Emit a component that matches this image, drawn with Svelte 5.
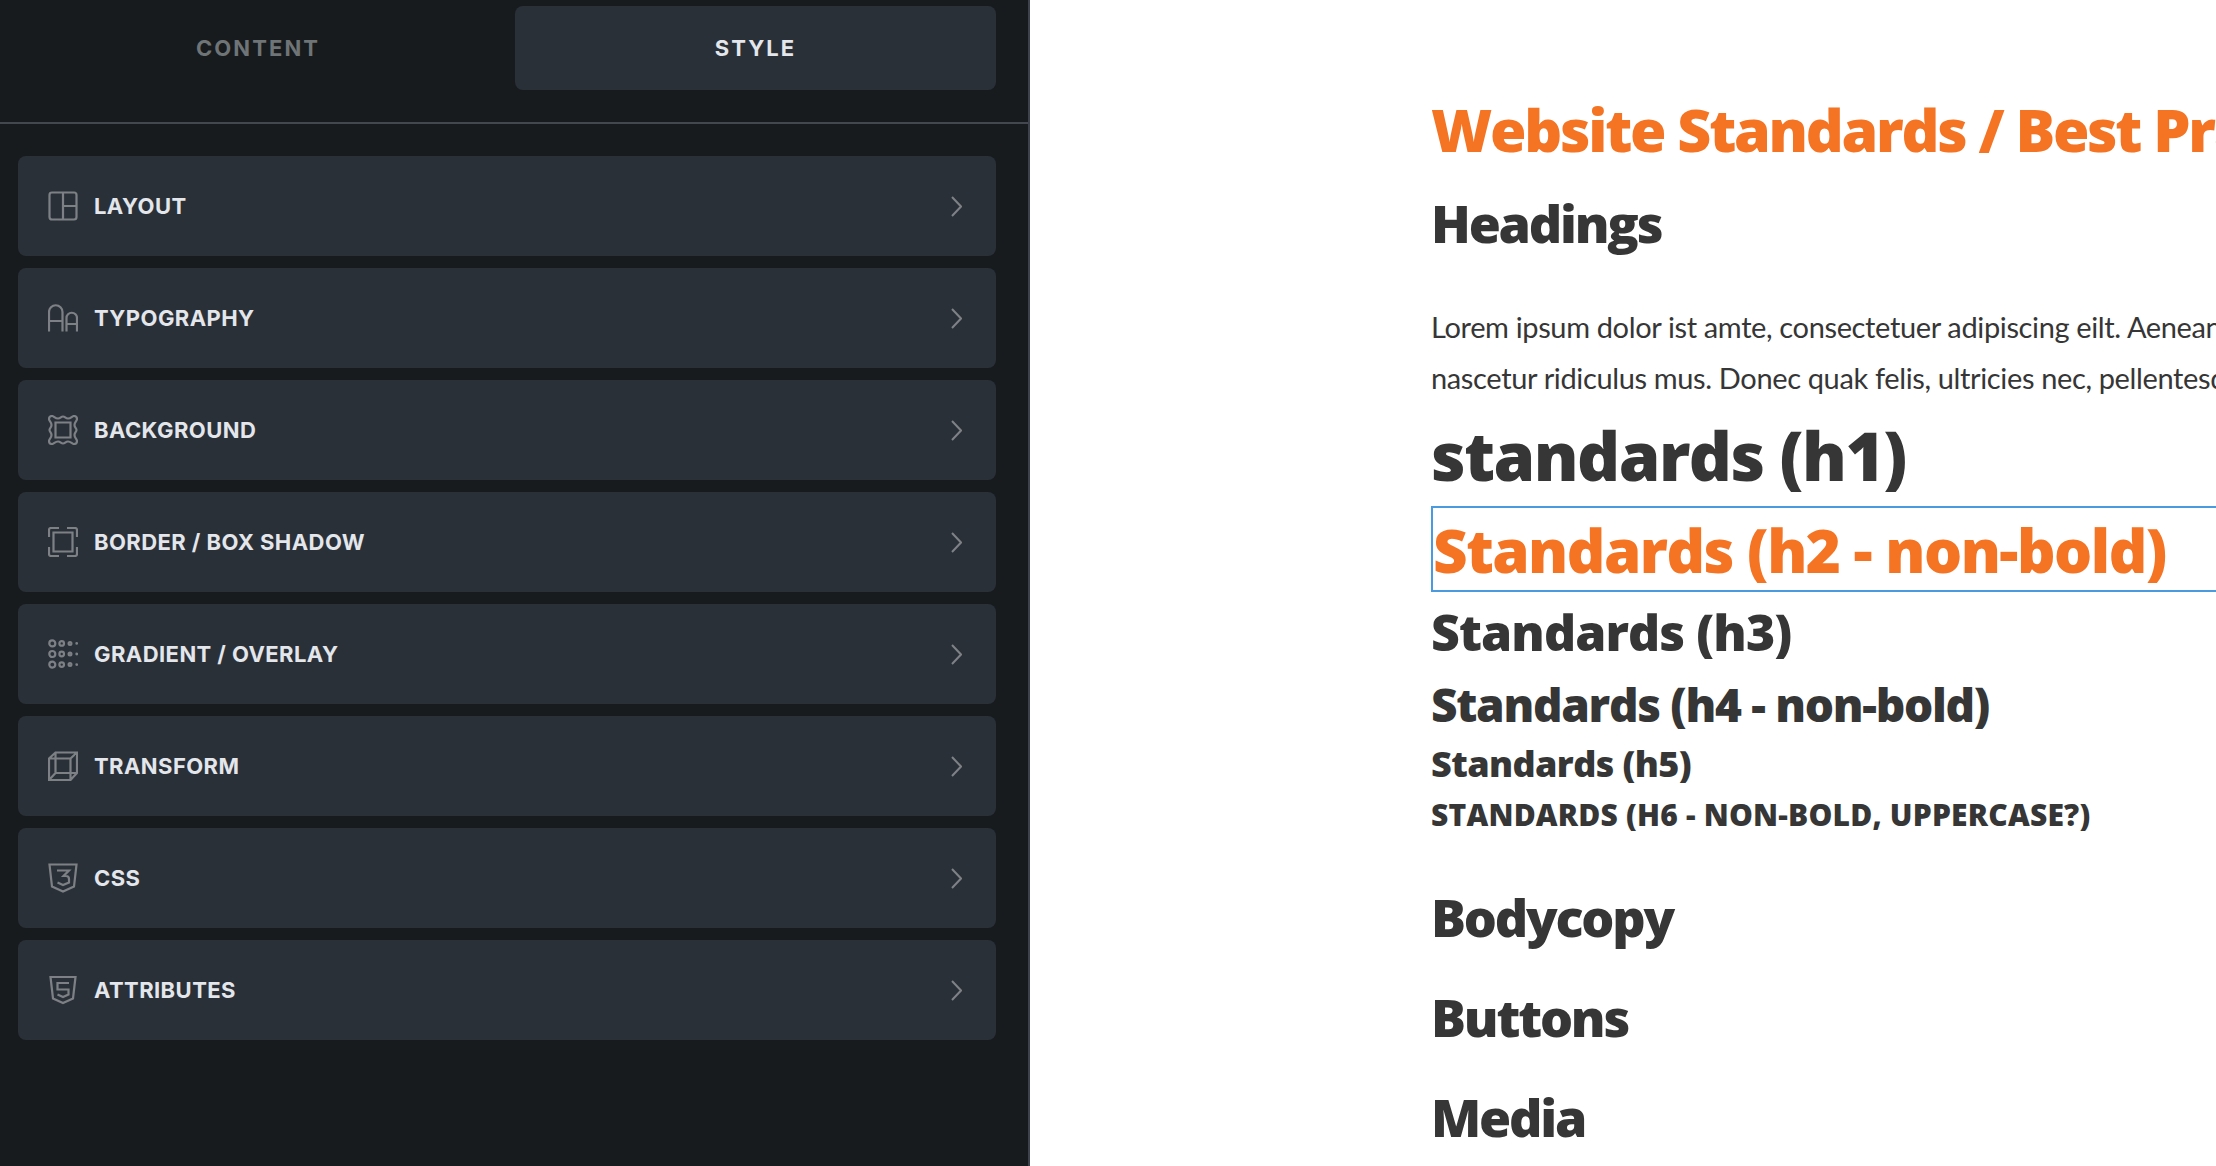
<script>
  const items = [
    { label: 'LAYOUT', d: 'M4 1.5H26Q28.5 1.5 28.5 4V26Q28.5 28.5 26 28.5H4Q1.5 28.5 1.5 26V4Q1.5 1.5 4 1.5ZM15 1.5V28.5M15 15H28.5' },
    { label: 'TYPOGRAPHY', d: 'M1 28.5V9A6.7 6.7 0 0 1 14.5 9V28.5M1 18H14.5M18.5 28.5V15A5.2 5.2 0 0 1 29 15V28.5M18.5 21H29' },
    { label: 'BACKGROUND', d: 'M4 1C6 1 7 3.5 10 3.5C12.5 3.5 13 1.5 15 1.5C17 1.5 17.5 3.5 20 3.5C23 3.5 24 1 26 1C28 1 29 2 29 4C29 6 26.5 7 26.5 10C26.5 12.5 28.5 13 28.5 15C28.5 17 26.5 17.5 26.5 20C26.5 23 29 24 29 26C29 28 28 29 26 29C24 29 23 26.5 20 26.5C17.5 26.5 17 28.5 15 28.5C13 28.5 12.5 26.5 10 26.5C7 26.5 6 29 4 29C2 29 1 28 1 26C1 24 3.5 23 3.5 20C3.5 17.5 1.5 17 1.5 15C1.5 13 3.5 12.5 3.5 10C3.5 7 1 6 1 4C1 2 2 1 4 1ZM7.5 7.5H22.5V22.5H7.5Z' },
    { label: 'BORDER / BOX SHADOW', d: 'M1 10V3Q1 1 3 1H11M19 1H27Q29 1 29 3V10M29 20V27Q29 29 27 29H19M11 29H3Q1 29 1 27V20M5.5 5.5H24.5V24.5H5.5Z' },
    { label: 'GRADIENT / OVERLAY', dots: true },
    { label: 'TRANSFORM', d: 'M1 7.5L7.5 1.5H29V22L22.5 29H1ZM1 7.5H22.5V29M7.5 1.5V22H29M22.5 7.5L29 1.5M7.5 22L1 29' },
    { label: 'CSS', d: 'M1.5 1.5H28.5L26 23.5L15 28.5L4 23.5ZM9 7.5H21L15.5 13H18Q21 13 21 16V19.5L15 22L9.5 19.5' },
    { label: 'ATTRIBUTES', d: 'M2.5 2H27.5L25 23.5L15 28L5 23.5ZM21 8H9.5V14.5H20.5V19.5L15 22L9.5 19.5' }
  ];
  const rows = [4.4, 15, 25.6];
  const dots = [[4.3, 3], [13.7, 2.3], [22, 1.4]];
</script>

<div class="page">
  <aside class="panel">
    <div class="tabs">
      <button class="tab">CONTENT</button>
      <button class="tab active">STYLE</button>
    </div>
    <div class="list">
      {#each items as item}
        <div class="card">
          <svg class="icon" viewBox="0 0 30 30" width="30" height="30" aria-hidden="true">
            {#if item.dots}
              {#each rows as y}
                {#each dots as [x, r]}
                  <circle cx={x} cy={y} r={r} />
                {/each}
                <circle class="solid" cx="28.7" cy={y} r="1.4" />
              {/each}
            {:else}
              <path d={item.d} />
            {/if}
          </svg>
          <span class="label">{item.label}</span>
          <svg class="chev" viewBox="0 0 11 21" width="11" height="21" aria-hidden="true">
            <path d="M1 1L10 10.5L1 20" />
          </svg>
        </div>
      {/each}
    </div>
  </aside>

  <main class="doc">
    <h1 class="title">Website Standards / Best Practices</h1>
    <h2 class="sec first">Headings</h2>
    <p>Lorem ipsum dolor ist amte, consectetuer adipiscing eilt. Aenean commodo ligula eget dolor. Aenean massa.</p>
    <p>nascetur ridiculus mus. Donec quak felis, ultricies nec, pellentesque eu, pretium quis, sem.</p>
    <div class="h1">standards (h1)</div>
    <div class="h2">Standards (h2 - non-bold)</div>
    <div class="h3">Standards (h3)</div>
    <div class="h4">Standards (h4 - non-bold)</div>
    <div class="h5">Standards (h5)</div>
    <div class="h6">STANDARDS (H6 - NON-BOLD, UPPERCASE?)</div>
    <h2 class="sec body">Bodycopy</h2>
    <h2 class="sec btn">Buttons</h2>
    <h2 class="sec media">Media</h2>
  </main>
</div>

<style>
  :global(body) { margin: 0; background: #fff; }
  .page {
    display: flex;
    width: 2216px;
    height: 1166px;
    overflow: hidden;
  }
  .panel {
    flex: 0 0 1028px;
    height: 1166px;
    background: #171b1e;
    border-right: 2px solid #3d434c;
    font-family: Inter, "Liberation Sans", sans-serif;
  }
  .tabs {
    display: grid;
    grid-template-columns: 480px 481px;
    column-gap: 17px;
    height: 84px;
    padding: 6px 32px 32px 18px;
    border-bottom: 2px solid #43474f;
  }
  .tab {
    border: 0;
    border-radius: 8px;
    background: none;
    color: #6f7477;
    font: 700 22px Inter, "Liberation Sans", sans-serif;
    letter-spacing: 2.1px;
    padding: 0;
  }
  .tab.active { background: #2a3038; color: #e3e6eb; }
  .list {
    display: flex;
    flex-direction: column;
    gap: 12px;
    padding: 32px 32px 0 18px;
  }
  .card {
    display: flex;
    align-items: center;
    height: 100px;
    padding: 0 34px 0 30px;
    background: #2a3038;
    border-radius: 8px;
  }
  .icon { flex: none; margin-right: 16px; margin-top: -1px; }
  .icon path, .icon circle {
    fill: none;
    stroke: #7d8186;
    stroke-width: 2.2;
  }
  .icon .solid { fill: #7d8186; stroke: none; }
  .label {
    flex: 1;
    color: #e3e6eb;
    font-size: 22px;
    font-weight: 700;
    letter-spacing: 0.43px;
  }
  .chev path { fill: none; stroke: #7e8287; stroke-width: 2; }

  .doc {
    flex: 1;
    min-width: 0;
    padding-left: 401px;
    font-family: "Open Sans", Lato, sans-serif;
    color: #363636;
    white-space: nowrap;
    overflow: hidden;
  }
  .doc h1, .doc h2, .doc div { margin: 0; font-weight: 800; letter-spacing: -1.5px; }
  .doc .title { color: #f47424; font-size: 59px; line-height: 70px; padding-top: 94px; letter-spacing: -2.25px; }
  .doc .sec { font-size: 52px; line-height: 60px; letter-spacing: -2.2px; }
  .doc .first { margin-top: 29px; }
  .doc p { margin: 0; font-family: Lato, "Open Sans", sans-serif; font-size: 29px; font-weight: 400; line-height: 51px; letter-spacing: -0.36px; }
  .doc .first + p { margin-top: 48px; }
  .doc .h1 { font-size: 67px; line-height: 80px; margin-top: 12px; }
  .doc .h2 {
    box-sizing: border-box;
    width: 1200px;
    height: 86px;
    border: 2px solid #4a9ae0;
    color: #f47424;
    font-size: 60px;
    line-height: 84px;
    margin-top: 11px;
  }
  .doc .h3 { font-size: 50px; line-height: 60px; margin-top: 10px; letter-spacing: -0.9px; }
  .doc .h4 { font-size: 46px; line-height: 60px; margin-top: 12px; letter-spacing: -1.3px; }
  .doc .h5 { font-size: 36px; line-height: 50px; margin-top: 5px; letter-spacing: -0.6px; }
  .doc .h6 { font-size: 30px; line-height: 50px; margin-top: 1px; letter-spacing: 0.2px; }
  .doc .body { margin-top: 47px; }
  .doc .btn { margin-top: 40px; }
  .doc .media { margin-top: 40px; }
</style>
